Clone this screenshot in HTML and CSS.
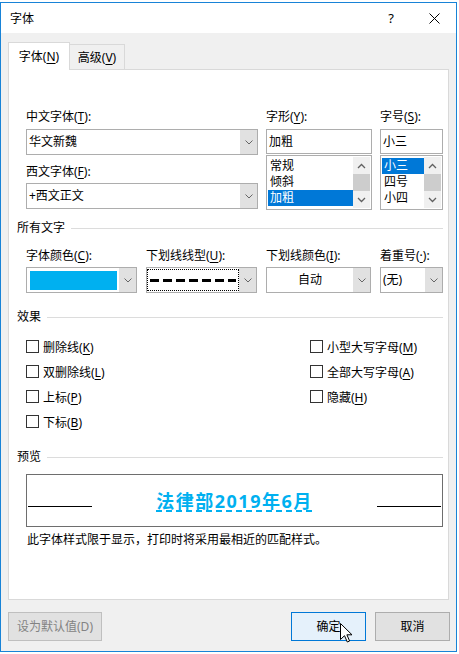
FILE: index.html
```html
<!DOCTYPE html>
<html lang="zh-CN">
<head>
    <meta charset="UTF-8">
    <title>字体</title>
    <link rel="stylesheet" href="styles.css">
</head>
<body>

<div class="window">
    <div class="titlebar">
        <span class="title">字体</span>
        <span class="help">?</span>
        <span class="close">
            <svg width="11" height="11" viewBox="0 0 11 11"><path d="M0.5 0.5L10.5 10.5M10.5 0.5L0.5 10.5" stroke="#000" stroke-width="1"/></svg>
        </span>
    </div>

    <div class="dialog">
        <div class="tabs">
            <div class="tab active">字体(<u>N</u>)</div>
            <div class="tab">高级(<u>V</u>)</div>
        </div>

        <div class="panel">
            <div class="font-grid">
                <div class="col">
                    <div class="label">中文字体(<u>T</u>):</div>
                    <div class="combo">
                        <span class="combo-text">华文新魏</span>
                        <span class="drop"><svg width="8" height="5" viewBox="0 0 8 5"><polyline points="0.5,0.5 4,4 7.5,0.5" fill="none" stroke="#666" stroke-width="1"/></svg></span>
                    </div>
                    <div class="label second">西文字体(<u>F</u>):</div>
                    <div class="combo">
                        <span class="combo-text">+西文正文</span>
                        <span class="drop"><svg width="8" height="5" viewBox="0 0 8 5"><polyline points="0.5,0.5 4,4 7.5,0.5" fill="none" stroke="#666" stroke-width="1"/></svg></span>
                    </div>
                </div>
                <div class="col">
                    <div class="label">字形(<u>Y</u>):</div>
                    <div class="textbox">加粗</div>
                    <div class="listbox">
                        <div class="items">
                            <div class="item">常规</div>
                            <div class="item">倾斜</div>
                            <div class="item selected">加粗</div>
                        </div>
                        <div class="scrollbar">
                            <span class="sb-btn"><svg width="9" height="6" viewBox="0 0 9 6"><polyline points="1,5 4.5,1.5 8,5" fill="none" stroke="#606060" stroke-width="1.3"/></svg></span>
                            <span class="thumb"></span>
                            <span class="track"></span>
                            <span class="sb-btn"><svg width="9" height="6" viewBox="0 0 9 6"><polyline points="1,1 4.5,4.5 8,1" fill="none" stroke="#606060" stroke-width="1.3"/></svg></span>
                        </div>
                    </div>
                </div>
                <div class="col">
                    <div class="label">字号(<u>S</u>):</div>
                    <div class="textbox">小三</div>
                    <div class="listbox">
                        <div class="items">
                            <div class="item selected">小三</div>
                            <div class="item">四号</div>
                            <div class="item">小四</div>
                        </div>
                        <div class="scrollbar">
                            <span class="sb-btn"><svg width="9" height="6" viewBox="0 0 9 6"><polyline points="1,5 4.5,1.5 8,5" fill="none" stroke="#606060" stroke-width="1.3"/></svg></span>
                            <span class="thumb"></span>
                            <span class="track"></span>
                            <span class="sb-btn"><svg width="9" height="6" viewBox="0 0 9 6"><polyline points="1,1 4.5,4.5 8,1" fill="none" stroke="#606060" stroke-width="1.3"/></svg></span>
                        </div>
                    </div>
                </div>
            </div>

            <div class="section">所有文字</div>
            <div class="attr-grid">
                <div>
                    <div class="label short">字体颜色(<u>C</u>):</div>
                    <div class="combo">
                        <span class="swatch"></span>
                        <span class="drop"><svg width="8" height="5" viewBox="0 0 8 5"><polyline points="0.5,0.5 4,4 7.5,0.5" fill="none" stroke="#666" stroke-width="1"/></svg></span>
                    </div>
                </div>
                <div>
                    <div class="label short">下划线线型(<u>U</u>):</div>
                    <div class="combo">
                        <span class="combo-text focused"><span class="dashes"></span></span>
                        <span class="drop"><svg width="8" height="5" viewBox="0 0 8 5"><polyline points="0.5,0.5 4,4 7.5,0.5" fill="none" stroke="#666" stroke-width="1"/></svg></span>
                    </div>
                </div>
                <div>
                    <div class="label short">下划线颜色(<u>I</u>):</div>
                    <div class="combo">
                        <span class="combo-text centered">自动</span>
                        <span class="drop"><svg width="8" height="5" viewBox="0 0 8 5"><polyline points="0.5,0.5 4,4 7.5,0.5" fill="none" stroke="#666" stroke-width="1"/></svg></span>
                    </div>
                </div>
                <div>
                    <div class="label short">着重号(<u>·</u>):</div>
                    <div class="combo">
                        <span class="combo-text">(无)</span>
                        <span class="drop"><svg width="8" height="5" viewBox="0 0 8 5"><polyline points="0.5,0.5 4,4 7.5,0.5" fill="none" stroke="#666" stroke-width="1"/></svg></span>
                    </div>
                </div>
            </div>

            <div class="section fx">效果</div>
            <div class="effects">
                <div class="check"><span class="box"></span><span>删除线(<u>K</u>)</span></div>
                <div class="check"><span class="box"></span><span>双删除线(<u>L</u>)</span></div>
                <div class="check"><span class="box"></span><span>上标(<u>P</u>)</span></div>
                <div class="check"><span class="box"></span><span>下标(<u>B</u>)</span></div>
                <div class="check"><span class="box"></span><span>小型大写字母(<u>M</u>)</span></div>
                <div class="check"><span class="box"></span><span>全部大写字母(<u>A</u>)</span></div>
                <div class="check"><span class="box"></span><span>隐藏(<u>H</u>)</span></div>
            </div>

            <div class="section pv">预览</div>
            <div class="preview">
                <span class="rule left"></span>
                <div class="sample"><span>法律部2019年6月</span></div>
                <span class="rule right"></span>
            </div>
            <div class="note">此字体样式限于显示，打印时将采用最相近的匹配样式。</div>
        </div>

        <div class="buttons">
            <div class="btn default">设为默认值(D)</div>
            <div class="btn ok">确定
                <svg class="cursor" width="13" height="20" viewBox="0 0 13 20"><path d="M0.5 0.5L0.5 16.5L4.5 12.7L7.3 19L9.6 18L6.9 11.8L12 11.8Z" fill="#fff" stroke="#000" stroke-width="1" stroke-linejoin="miter"/></svg>
            </div>
            <div class="btn cancel">取消</div>
        </div>
    </div>
</div>

</body>
</html>
```

FILE: styles.css
```css
body {
    margin: 0;
    background: #fff;
    font-family: "Noto Sans", "Noto Sans CJK SC", sans-serif;
    font-size: 12px;
    color: #000;
    text-autospace: no-autospace;
}
u {
    text-underline-offset: 2px;
}
.window {
    margin-top: 2px;
    width: 457px;
    height: 650px;
    box-sizing: border-box;
    border: 1px solid #1883d7;
    background: #f0f0f0;
    display: flex;
    flex-direction: column;
}
.titlebar {
    flex: none;
    height: 30px;
    background: #fff;
    display: flex;
    align-items: center;
}
.title {
    margin-left: 9px;
}
.help {
    margin-left: auto;
    margin-right: 35px;
    font-size: 13px;
}
.close {
    display: flex;
    margin-right: 16px;
}
.dialog {
    flex: 1;
    padding: 9px 7px 0 7px;
    display: flex;
    flex-direction: column;
}
.tabs {
    display: flex;
    height: 27px;
    align-items: flex-start;
}
.tab {
    box-sizing: border-box;
    width: 55px;
    height: 25px;
    margin-top: 2px;
    border: 1px solid #d9d9d9;
    border-left: none;
    border-bottom: none;
    background: #f0f0f0;
    text-align: center;
    line-height: 25px;
}
.tab.active {
    width: 62px;
    height: 28px;
    margin-top: 0;
    border-left: 1px solid #d9d9d9;
    background: #fff;
    line-height: 27px;
    position: relative;
    z-index: 1;
}
.panel {
    box-sizing: border-box;
    height: 531px;
    background: #fff;
    border: 1px solid #d9d9d9;
    padding: 0 5px 0 8px;
}
.font-grid {
    margin: 39px 0 0 9px;
    display: grid;
    grid-template-columns: 232px 106px 63px;
    column-gap: 8px;
}
.label {
    height: 16px;
    line-height: 16px;
    margin-bottom: 4px;
    white-space: nowrap;
}
.label.second {
    margin-top: 9px;
    margin-bottom: 3px;
}
.label.short {
    margin-bottom: 3px;
}
.combo {
    box-sizing: border-box;
    height: 26px;
    border: 1px solid #adadad;
    background: #fff;
    display: flex;
}
.combo-text {
    flex: 1;
    padding-left: 2px;
    line-height: 24px;
    white-space: nowrap;
}
.combo-text.centered {
    text-align: center;
    padding-left: 0;
}
.combo-text.focused {
    margin: 2px 1px 2px 1px;
    padding: 0 2px;
    outline: 1px dotted #000;
    display: flex;
    align-items: center;
}
.dashes {
    flex: 1;
    height: 3px;
    background: repeating-linear-gradient(90deg, #000 0 9px, transparent 9px 13px);
}
.swatch {
    flex: 1;
    margin: 3px 2px 2px 3px;
    background: #00b0f0;
}
.drop {
    width: 17px;
    background: #e1e1e1;
    display: flex;
    align-items: center;
    justify-content: center;
}
.textbox {
    box-sizing: border-box;
    height: 25px;
    border: 1px solid #adadad;
    padding-left: 2px;
    line-height: 23px;
}
.listbox {
    box-sizing: border-box;
    height: 55px;
    margin-top: 1px;
    border: 1px solid #adadad;
    padding: 1px;
    display: flex;
}
.items {
    flex: 1;
    padding-top: 1px;
}
.item {
    height: 16px;
    line-height: 16px;
    padding-left: 2px;
}
.item.selected {
    background: #0078d7;
    color: #fff;
}
.scrollbar {
    width: 17px;
    background: #f0f0f0;
    display: flex;
    flex-direction: column;
}
.sb-btn {
    height: 17px;
    display: flex;
    align-items: center;
    justify-content: center;
}
.thumb {
    height: 17px;
    background: #cdcdcd;
}
.track {
    flex: 1;
}
.section {
    margin-top: 10px;
    display: flex;
    align-items: center;
    gap: 6px;
    line-height: 16px;
}
.section::after {
    content: "";
    flex: 1;
    height: 1px;
    background: #dcdcdc;
}
.section.fx {
    margin-top: 16px;
}
.section.pv {
    margin-top: 15px;
}
.attr-grid {
    margin: 12px 0 0 9px;
    display: grid;
    grid-template-columns: 111px 111px 105px 63px;
    column-gap: 9px;
}
.effects {
    margin: 9px 0 0 9px;
    display: grid;
    grid-template-columns: 284px 1fr;
    grid-template-rows: repeat(4, 25px);
    grid-auto-flow: column;
}
.check {
    display: flex;
    align-items: center;
    gap: 4px;
}
.box {
    width: 13px;
    height: 13px;
    box-sizing: border-box;
    border: 1px solid #333;
    background: #fff;
}
.preview {
    margin: 9px 0 0 9px;
    height: 53px;
    box-sizing: border-box;
    border: 1px solid #6e6e6e;
    display: flex;
    align-items: center;
}
.rule {
    width: 64px;
    height: 1px;
    margin-top: 12px;
    background: #000;
}
.rule.left {
    margin-left: 1px;
}
.rule.right {
    margin-right: 1px;
}
.sample {
    flex: 1;
    text-align: center;
    color: #00b0f0;
    font-weight: bold;
    font-size: 18px;
    letter-spacing: 1.5px;
    line-height: 22px;
}
.sample span {
    text-decoration: underline dashed #00b0f0;
    text-decoration-thickness: 2px;
    text-underline-offset: 3px;
}
.note {
    margin: 5px 0 0 10px;
    line-height: 16px;
}
.buttons {
    display: flex;
    margin-top: 12px;
}
.btn {
    box-sizing: border-box;
    height: 29px;
    border: 1px solid #adadad;
    background: #e1e1e1;
    text-align: center;
    line-height: 27px;
}
.btn.default {
    width: 94px;
    color: #838383;
    border-color: #bfbfbf;
}
.btn.ok {
    margin-left: auto;
    width: 75px;
    border-color: #0078d7;
    background: #e5f1fb;
    position: relative;
}
.btn.cancel {
    width: 75px;
    margin-left: 9px;
    margin-right: -1px;
}
.cursor {
    position: absolute;
    left: 48px;
    top: 10px;
}
```
